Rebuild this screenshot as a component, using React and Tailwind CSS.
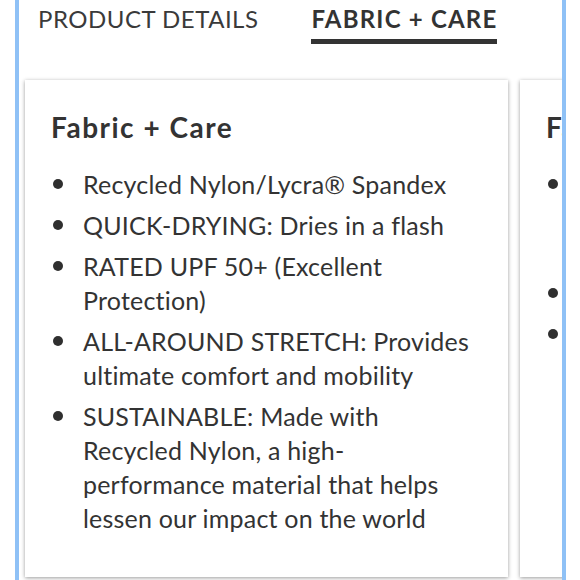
import React from 'react';

const fabricItems = [
    'Recycled Nylon/Lycra® Spandex',
    'QUICK-DRYING: Dries in a flash',
    'RATED UPF 50+ (Excellent Protection)',
    'ALL-AROUND STRETCH: Provides ultimate comfort and mobility',
    'SUSTAINABLE: Made with Recycled Nylon, a high-performance material that helps lessen our impact on the world',
];

const careItems = [
    ['Machine wash cold', 'with like colors,', 'gentle cycle'],
    ['Do not bleach'],
    ['Line dry'],
];

const Bullet = () => (
    <span className="mt-[12px] ml-[2px] h-[10px] w-[10px] shrink-0 rounded-full bg-[#2f2f2f]" />
);

const Card = ({ title, children }) => (
    <div className="w-[483px] shrink-0 bg-white pl-[26px] pr-[35px] pt-[30px] pb-[40px] shadow-[0_1px_4px_rgba(0,0,0,0.4)]">
        <h3 className="text-[28px] leading-[34px] font-bold tracking-[1.5px] text-[#333] mb-[23px]">{title}</h3>
        <ul className="flex flex-col gap-[7px]">{children}</ul>
    </div>
);

export default function App() {
    return (
        <div className="w-[580px] h-[580px] bg-white overflow-hidden font-['Lato','Liberation_Sans',sans-serif] text-[#333]">
            <div className="ml-[15px] w-[551px] h-[580px] border-x-4 border-[#8fc1f6] overflow-hidden">
                <div className="flex h-[80px] items-start pl-[19px] pt-[2px] gap-[53px]">
                    <button className="text-[24px] leading-[34px] tracking-[0.5px] text-[#3a3a3a]">PRODUCT DETAILS</button>
                    <button className="text-[24px] leading-[34px] font-bold tracking-[1.2px] text-[#333] border-b-[5px] border-[#333] pb-[3px]">
                        FABRIC + CARE
                    </button>
                </div>
                <div className="flex gap-[12px] pl-[6px] h-[497px]">
                    <Card title="Fabric + Care">
                        {fabricItems.map((item) => (
                            <li key={item} className="flex gap-[20px] text-[25px] leading-[34px] tracking-[0.2px]">
                                <Bullet />
                                <span>{item}</span>
                            </li>
                        ))}
                    </Card>
                    <Card title="Fabric + Care">
                        {careItems.map((lines) => (
                            <li key={lines[0]} className="flex gap-[20px] text-[25px] leading-[34px] tracking-[0.2px]">
                                <Bullet />
                                <span>
                                    {lines.map((l, i) => (
                                        <span key={i} className="block">{l}</span>
                                    ))}
                                </span>
                            </li>
                        ))}
                    </Card>
                </div>
            </div>
        </div>
    );
}
